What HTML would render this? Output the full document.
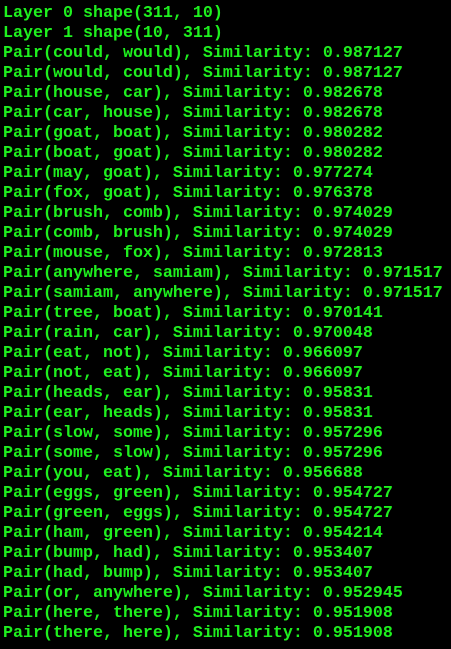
<!DOCTYPE html>
<html><head><style>
html,body{margin:0;padding:0;background:#000;width:451px;height:649px;overflow:hidden}
pre{margin:0;padding:4px 0 0 3px;font-family:"Liberation Mono",monospace;font-size:16.67px;line-height:20px;color:#1ef01e;white-space:pre;font-weight:bold}
</style></head><body><pre>Layer 0 shape(311, 10)
Layer 1 shape(10, 311)
Pair(could, would), Similarity: 0.987127
Pair(would, could), Similarity: 0.987127
Pair(house, car), Similarity: 0.982678
Pair(car, house), Similarity: 0.982678
Pair(goat, boat), Similarity: 0.980282
Pair(boat, goat), Similarity: 0.980282
Pair(may, goat), Similarity: 0.977274
Pair(fox, goat), Similarity: 0.976378
Pair(brush, comb), Similarity: 0.974029
Pair(comb, brush), Similarity: 0.974029
Pair(mouse, fox), Similarity: 0.972813
Pair(anywhere, samiam), Similarity: 0.971517
Pair(samiam, anywhere), Similarity: 0.971517
Pair(tree, boat), Similarity: 0.970141
Pair(rain, car), Similarity: 0.970048
Pair(eat, not), Similarity: 0.966097
Pair(not, eat), Similarity: 0.966097
Pair(heads, ear), Similarity: 0.95831
Pair(ear, heads), Similarity: 0.95831
Pair(slow, some), Similarity: 0.957296
Pair(some, slow), Similarity: 0.957296
Pair(you, eat), Similarity: 0.956688
Pair(eggs, green), Similarity: 0.954727
Pair(green, eggs), Similarity: 0.954727
Pair(ham, green), Similarity: 0.954214
Pair(bump, had), Similarity: 0.953407
Pair(had, bump), Similarity: 0.953407
Pair(or, anywhere), Similarity: 0.952945
Pair(here, there), Similarity: 0.951908
Pair(there, here), Similarity: 0.951908</pre></body></html>
